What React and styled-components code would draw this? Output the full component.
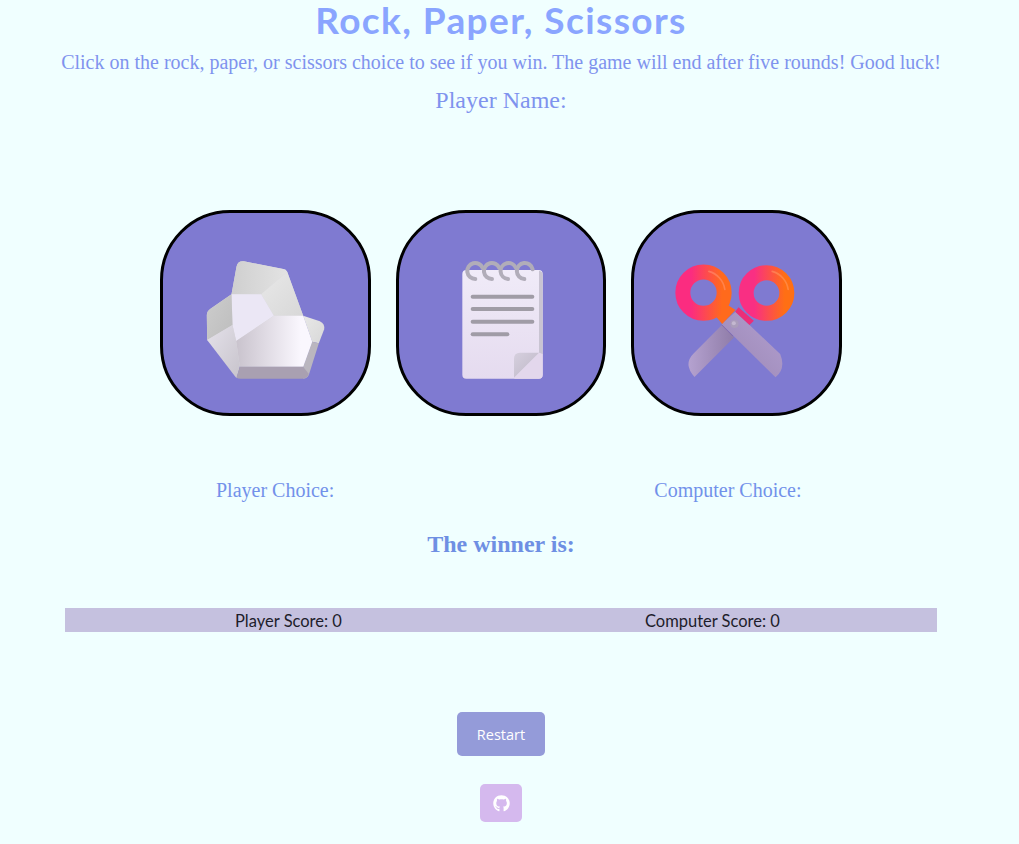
import React from "react";
import styled, { createGlobalStyle } from "styled-components";
import { FaGithub } from "react-icons/fa";

const Global = createGlobalStyle`
  html, body { margin: 0; padding: 0; background: #f0ffff; overflow: hidden; }
  body { font-family: "Liberation Serif", serif; }
`;

const Page = styled.main`
  width: 1002px;
  height: 844px;
  display: flex;
  flex-direction: column;
  align-items: center;
`;
const Title = styled.h1`
  margin: 0;
  height: 40px;
  line-height: 39px;
  font-family: "Lato", sans-serif;
  font-weight: 700;
  font-size: 37px;
  letter-spacing: 1.4px;
  color: #8aa5ff;
`;
const Intro = styled.p`
  margin: 0;
  height: 44px;
  line-height: 44px;
  font-size: 20px;
  color: #7f93ee;
  white-space: nowrap;
`;
const PlayerName = styled.div`
  height: 33px;
  line-height: 33px;
  font-size: 24px;
  color: #7f93ee;
`;
const Choices = styled.section`
  margin-top: 93px;
  display: flex;
  gap: 25px;
`;
const Choice = styled.button`
  width: 210.5px;
  height: 206px;
  box-sizing: border-box;
  padding: 14px 0 0;
  border: 3px solid #000;
  border-radius: 70px;
  background: #7f7ad1;
  display: flex;
  align-items: center;
  justify-content: center;
`;
const Results = styled.div`
  align-self: flex-start;
  margin-top: 62px;
  padding-left: 216px;
  display: flex;
  gap: 320px;
  height: 24px;
  line-height: 24px;
  font-size: 20px;
  color: #7291ea;
`;
const Winner = styled.h2`
  margin: 27px 0 0;
  height: 30px;
  line-height: 30px;
  font-size: 24px;
  font-weight: 700;
  color: #6e8fe3;
`;
const ScoreBar = styled.div`
  margin-top: 49px;
  box-sizing: border-box;
  width: 872px;
  height: 24px;
  padding: 1px 0 0 170px;
  display: flex;
  gap: 303px;
  align-items: center;
  background: #c5c1df;
  font-family: "Lato", sans-serif;
  font-size: 16.5px;
  font-weight: 400;
  color: #1d1d2b;
`;
const Restart = styled.button`
  margin-top: 80px;
  width: 88px;
  height: 44px;
  border: 0;
  border-radius: 5px;
  background: #949bd9;
  color: #fff;
  font-family: "Open Sans", sans-serif;
  font-size: 14.5px;
`;
const GitHubLink = styled.a`
  margin-top: 28px;
  width: 42px;
  height: 38px;
  border-radius: 5px;
  background: #d5b9ee;
  color: #fff;
  display: flex;
  align-items: center;
  justify-content: center;
  font-size: 17px;
`;
const Art = styled.svg`
  width: 120px;
  height: 120px;
  display: block;
  overflow: visible;
`;

const Rock = () => (
  <Art viewBox="166.5 180 360 360">
    <defs>
      <linearGradient id="rTop" x1="0" x2="1" y1="0" y2="0"><stop offset="0" stopColor="#cfcfcf" /><stop offset="1" stopColor="#e3e3e3" /></linearGradient>
      <linearGradient id="rMid" x1="0" x2="1" y1="0" y2="0"><stop offset="0" stopColor="#c9c3cd" /><stop offset="0.85" stopColor="#faf7fe" /></linearGradient>
      <linearGradient id="rLeft" x1="0" x2="1" y1="0" y2="1"><stop offset="0" stopColor="#cdcdcd" /><stop offset="1" stopColor="#bdbdbd" /></linearGradient>
      <linearGradient id="rLow" x1="0" x2="1" y1="0" y2="1"><stop offset="0" stopColor="#e4e1ea" /><stop offset="1" stopColor="#c8c4cc" /></linearGradient>
      <linearGradient id="rUp" x1="0" x2="1" y1="0" y2="1"><stop offset="0" stopColor="#e8e8e8" /><stop offset="1" stopColor="#d8d8d8" /></linearGradient>
    </defs>
    <path d="M458 347 L508 364 Q524 372 521 388 L505 430 L485 425 Z" fill="url(#rUp)" />
    <path d="M485 425 L505 430 L478 515 Q474 535 458 536 L458 500 Z" fill="#bab6bf" />
    <path d="M243 283 L258 200 Q262 182 280 184 L398 207 Q406 208 410 215 L458 347 L485 425 L458 500 L268 500 L170 420 L169 345 Q170 332 180 326 Z" fill="#d8d6dc" />
    <path d="M243 283 L258 200 Q262 182 280 184 L398 207 Q406 208 410 215 L332 283 Z" fill="url(#rTop)" />
    <path d="M410 215 L458 347 L370 347 L332 283 Z" fill="url(#rUp)" />
    <path d="M243 283 L332 283 L370 347 L257 423 L246 375 Z" fill="#ebe7f5" />
    <path d="M257 423 L370 347 L458 347 L485 425 L458 500 L268 500 Z" fill="url(#rMid)" />
    <path d="M243 283 L246 375 L170 420 L169 345 Q170 332 180 326 Z" fill="url(#rLeft)" />
    <path d="M170 420 L246 375 L257 423 L268 500 L258 535 Z" fill="url(#rLow)" />
    <path d="M268 500 L458 500 L475 522 Q470 536 455 536 L270 536 Q262 536 258 533 Z" fill="#a9a0b1" />
  </Art>
);

const Paper = () => (
  <Art viewBox="153 180 360 360">
    <defs>
      <linearGradient id="pBody" x1="0" x2="0" y1="0" y2="1"><stop offset="0" stopColor="#f0ebf8" /><stop offset="1" stopColor="#e5dbef" /></linearGradient>
      <linearGradient id="pFold" x1="0" x2="1" y1="0" y2="1"><stop offset="0" stopColor="#d6d0de" /><stop offset="1" stopColor="#bdb6c6" /></linearGradient>
    </defs>
    <rect x="217" y="210" width="241" height="326" rx="12" fill="url(#pBody)" />
    <path d="M447 212 Q458 214 458 224 L458 465 L447 458 Z" fill="#c9c4d2" />
    <path d="M447 458 L458 462 L458 524 Q458 536 446 536 L372 536 Z" fill="#e3d7ec" />
    <path d="M372 533 L372 476 Q372 458 390 458 L447 458 Z" fill="url(#pFold)" />
    <g stroke="#a09ca6" strokeWidth="12" strokeLinecap="round">
      <line x1="248" y1="290" x2="427" y2="290" />
      <line x1="248" y1="327" x2="427" y2="327" />
      <line x1="248" y1="365" x2="427" y2="365" />
      <line x1="248" y1="403" x2="352" y2="403" />
    </g>
    <g fill="none" stroke="#b1adb9" strokeWidth="12" strokeLinecap="round">
      <path d="M256 237 A24 24 0 1 1 278 204" />
      <path d="M306 237 A24 24 0 1 1 328 204" />
      <path d="M354 237 A24 24 0 1 1 378 204" />
      <path d="M403 237 A24 24 0 1 1 428 208" />
    </g>
  </Art>
);

const Scissors = () => (
  <Art viewBox="154.5 180 360 360">
    <defs>
      <linearGradient id="sLeft" x1="0" x2="1" y1="0" y2="0"><stop offset="0.2" stopColor="#fb2c80" /><stop offset="0.95" stopColor="#ff6a1c" /></linearGradient>
      <linearGradient id="sRight" x1="0" x2="1" y1="0" y2="0"><stop offset="0.2" stopColor="#f92f83" /><stop offset="0.95" stopColor="#ff6f14" /></linearGradient>
      <linearGradient id="sBladeL" x1="0" x2="1" y1="0" y2="0"><stop offset="0" stopColor="#b5a2d0" /><stop offset="1" stopColor="#8f7ca8" /></linearGradient>
      <linearGradient id="sBladeR" x1="0" x2="1" y1="1" y2="0"><stop offset="0" stopColor="#9a86b4" /><stop offset="1" stopColor="#b3a0d0" /></linearGradient>
    </defs>
    <path d="M290 374 L205 460 Q172 492 207 531 L326 412 Z" fill="url(#sBladeL)" />
    <path d="M330 335 L464 462 Q482 505 450 532 L288 372 Z" fill="url(#sBladeR)" />
    <path d="M339 322 L385 362 L372 375 L329 335 Z" fill="#ec2e78" />
    <circle cx="423" cy="279" r="61" fill="none" stroke="url(#sRight)" strokeWidth="45" />
    <path d="M272 350 L302 312 L330 330 L290 372 Z" fill="#ff6a1c" />
    <circle cx="234" cy="278" r="62" fill="none" stroke="url(#sLeft)" strokeWidth="45" />
    <path d="M250 214 A66 66 0 0 1 298 268" fill="none" stroke="#ff9a7a" strokeWidth="5" strokeLinecap="round" opacity="0.5" />
    <path d="M440 214 A66 66 0 0 1 488 268" fill="none" stroke="#ffa06a" strokeWidth="5" strokeLinecap="round" opacity="0.5" />
    <path d="M288 374 L322 408" stroke="#7d62a8" strokeWidth="2" />
    <circle cx="327" cy="372" r="12" fill="#ab9dbb" />
    <circle cx="325" cy="370" r="6" fill="#c4b8d0" />
  </Art>
);

export default function App() {
  return (
    <Page>
      <Global />
      <Title>Rock, Paper, Scissors</Title>
      <Intro>Click on the rock, paper, or scissors choice to see if you win. The game will end after five rounds! Good luck!</Intro>
      <PlayerName>Player Name:</PlayerName>
      <Choices>
        <Choice><Rock /></Choice>
        <Choice><Paper /></Choice>
        <Choice><Scissors /></Choice>
      </Choices>
      <Results>
        <span>Player Choice:</span>
        <span>Computer Choice:</span>
      </Results>
      <Winner>The winner is:</Winner>
      <ScoreBar>
        <span>Player Score: 0</span>
        <span>Computer Score: 0</span>
      </ScoreBar>
      <Restart>Restart</Restart>
      <GitHubLink><FaGithub /></GitHubLink>
    </Page>
  );
}
